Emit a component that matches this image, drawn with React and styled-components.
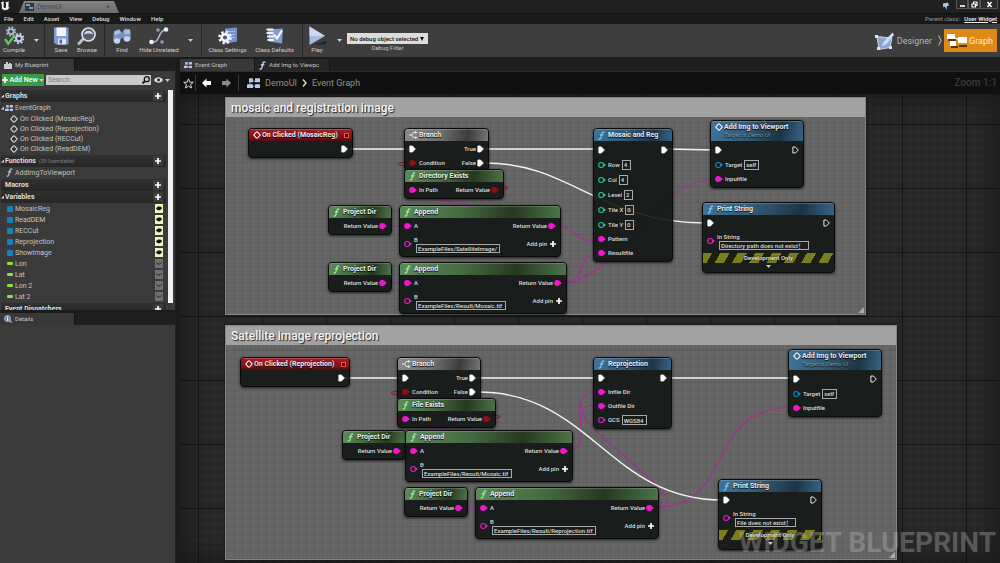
import React, { useState } from 'react';
import styled, { createGlobalStyle, css } from 'styled-components';

const graphItems = ['On Clicked (MosaicReg)', 'On Clicked (Reprojection)', 'On Clicked (RECCut)', 'On Clicked (ReadDEM)'];
const widgetVars = ['MosaicReg', 'ReadDEM', 'RECCut', 'Reprojection', 'ShowImage'];
const numberVars = ['Lon', 'Lat', 'Lon 2', 'Lat 2'];

const PINK = '#f018cc';
const GREEN = '#1fc79a';
const BLUE = '#1689c4';
const RED = '#950e10';

const execPin = { exec: true };
const execOn = { exec: true, on: true };
const returnPin = { color: PINK, on: true, label: 'Return Value' };

const branchRows = [
    { left: execOn, right: { exec: true, on: true, label: 'True' } },
    { left: { color: RED, on: true, label: 'Condition' }, right: { exec: true, on: true, label: 'False' } },
];

const existsRows = [
    { left: { color: PINK, on: true, label: 'In Path' }, right: { color: RED, on: true, label: 'Return Value' } },
];

const addImgRows = [
    { h: 15, left: execOn, right: execPin },
    { h: 15, left: { color: BLUE, label: 'Target', value: 'self', box: 15 } },
    { left: { color: PINK, on: true, label: 'Inputfile' } },
];

const appendRows = (value, box) => [
    { left: { color: PINK, on: true, label: 'A' }, right: returnPin },
    { h: 22, left: { color: PINK, label: 'B', value, box, stacked: true }, addPin: true },
];

const printRows = (value, box) => [
    { left: execOn, right: execPin },
    { h: 22, left: { color: PINK, label: 'In String', value, box, stacked: true } },
];

const nodes = [
    { id: 'click1', kind: 'event', icon: 'event', title: 'On Clicked (MosaicReg)', x: 68, y: 34, w: 105, bind: true, rows: [{ right: execOn }] },
    { id: 'branch1', kind: 'flow', icon: 'branch', title: 'Branch', x: 224, y: 34, w: 85, rows: branchRows },
    { id: 'dir', kind: 'pure', icon: 'fn', title: 'Directory Exists', x: 224, y: 75, w: 100, rows: existsRows },
    { id: 'proj1', kind: 'pure', icon: 'fn', title: 'Project Dir', x: 148, y: 111, w: 64, rows: [{ right: returnPin }] },
    { id: 'append1', kind: 'pure', icon: 'fn', title: 'Append', x: 219, y: 111, w: 162, rows: appendRows('ExampleFiles/SatelliteImage/', 84) },
    { id: 'proj2', kind: 'pure', icon: 'fn', title: 'Project Dir', x: 148, y: 168, w: 64, rows: [{ right: returnPin }] },
    { id: 'append2', kind: 'pure', icon: 'fn', title: 'Append', x: 219, y: 168, w: 168, rows: appendRows('ExampleFiles/Result/Mosaic.tif', 90) },
    { id: 'mosaic', kind: 'call', icon: 'fn', title: 'Mosaic and Reg', x: 413, y: 34, w: 80, rows: [
        { h: 15, left: execOn, right: execOn },
        { h: 15, left: { color: GREEN, label: 'Row', value: '4', box: 9 } },
        { h: 15, left: { color: GREEN, label: 'Col', value: '4', box: 9 } },
        { h: 15, left: { color: GREEN, label: 'Level', value: '2', box: 9 } },
        { h: 15, left: { color: GREEN, label: 'Tile X', value: '0', box: 9 } },
        { h: 15, left: { color: GREEN, label: 'Tile Y', value: '0', box: 9 } },
        { left: { color: PINK, on: true, label: 'Pattern' } },
        { left: { color: PINK, on: true, label: 'Resultfile' } },
    ] },
    { id: 'add1', kind: 'call', icon: 'event', title: 'Add Img to Viewport', sub: 'Target is Demo UI', x: 530, y: 26, w: 94, rows: addImgRows },
    { id: 'print1', kind: 'call', icon: 'fn', title: 'Print String', x: 522, y: 108, w: 133, dev: true, rows: printRows('Directory path does not exist！', 90) },
    { id: 'click2', kind: 'event', icon: 'event', title: 'On Clicked (Reprojection)', x: 60, y: 263, w: 110, bind: true, rows: [{ right: execOn }] },
    { id: 'branch2', kind: 'flow', icon: 'branch', title: 'Branch', x: 217, y: 263, w: 84, rows: branchRows },
    { id: 'file', kind: 'pure', icon: 'fn', title: 'File Exists', x: 217, y: 304, w: 99, rows: existsRows },
    { id: 'proj3', kind: 'pure', icon: 'fn', title: 'Project Dir', x: 162, y: 336, w: 64, rows: [{ right: returnPin }] },
    { id: 'append3', kind: 'pure', icon: 'fn', title: 'Append', x: 225, y: 336, w: 168, rows: appendRows('ExampleFiles/Result/Mosaic.tif', 90) },
    { id: 'proj4', kind: 'pure', icon: 'fn', title: 'Project Dir', x: 224, y: 393, w: 64, rows: [{ right: returnPin }] },
    { id: 'append4', kind: 'pure', icon: 'fn', title: 'Append', x: 295, y: 393, w: 184, rows: appendRows('ExampleFiles/Result/Reprojection.tif', 104) },
    { id: 'reproj', kind: 'call', icon: 'fn', title: 'Reprojection', x: 413, y: 263, w: 79, rows: [
        { left: execOn, right: execOn },
        { left: { color: PINK, on: true, label: 'Infile Dir' } },
        { left: { color: PINK, on: true, label: 'Outfile Dir' } },
        { left: { color: PINK, label: 'GCS', value: 'WGS84', box: 25 } },
    ] },
    { id: 'add2', kind: 'call', icon: 'event', title: 'Add Img to Viewport', sub: 'Target is Demo UI', x: 608, y: 255, w: 94, rows: addImgRows },
    { id: 'print2', kind: 'call', icon: 'fn', title: 'Print String', x: 538, y: 385, w: 104, dev: true, rows: printRows('File does not exist！', 61) },
];

const stringWires = [
    'M203 132 H225', 'M203 189 H225', 'M216 357 H231', 'M280 414 H302',
    'M375 132 C420 132 180 95 230 95',
    'M375 132 C400 132 390 147 417 147',
    'M381 189 C410 189 395 160 417 160',
    'M381 189 C440 189 470 85 536 85',
    'M387 357 C430 357 170 324 221 324',
    'M387 357 C420 357 380 298 417 298',
    'M472 414 C540 414 350 311 417 311',
    'M472 414 C560 414 520 313 614 313',
];

const boolWires = ['M230 69 C216 67 214 72 226 72', 'M316 93 C332 91 332 96 318 95', 'M223 298 C209 296 207 301 219 301', 'M308 322 C324 320 324 325 310 324'];

const execWires = [
    'M170 55 H230', 'M304 55 H417', 'M487 55 L534 56', 'M306 69 C390 69 420 129 526 129',
    'M164 284 H221', 'M296 284 H417', 'M482 284 H612', 'M298 298 C410 298 430 406 542 406',
];

/* ---------- icons ---------- */

const FnIcon = ({ color = '#cfe8ff' }) => (
    <svg width="7" height="9" viewBox="0 0 7 9" fill="none" stroke={color} strokeWidth="1.2" strokeLinecap="round">
        <path d="M6 1.2C4.6.5 4.1 1.5 3.8 3L3 6.3C2.7 7.8 2 8.4 1 7.9M2.2 3.8h2.8" />
    </svg>
);

const DiamondIcon = ({ color = '#fff' }) => (
    <svg width="8" height="8" viewBox="0 0 8 8" fill="none" stroke={color} strokeWidth="1.1">
        <path d="M3.4 1h1.1L7.2 4 4.5 7H3.4L.8 4z" />
    </svg>
);

const BranchIcon = () => (
    <svg width="9" height="8" viewBox="0 0 9 8" fill="none" stroke="#eee">
        <path d="M0 4h2.5M7 1.4H4.5L2.5 4l2 2.6H7" />
        <path d="M6.2 0L8.6 1.4 6.2 2.8zM6.2 5.2l2.4 1.4L6.200 8z" fill="#eee" stroke="none" />
    </svg>
);

const ExecPin = ({ on }) => (
    <svg width="7" height="8" viewBox="0 0 7 8" fill={on ? '#fff' : 'none'} stroke="#fff" strokeWidth="0.9" strokeLinejoin="round">
        <path d="M.9 1H3.4L6.3 4 3.4 7H.9z" />
    </svg>
);

const DataPin = ({ color, on }) => (
    <svg width="8" height="8" viewBox="0 0 8 8">
        <circle cx="3.2" cy="4" r="2.5" fill={on ? color : 'none'} stroke={color} strokeWidth="1.1" />
        <path d="M6 2.6L8 4 6 5.4z" fill={color} />
    </svg>
);

const PlusIcon = ({ size = 6 }) => (
    <svg width={size} height={size} viewBox="0 0 6 6"><path d="M3 0v6M0 3h6" stroke="#fff" strokeWidth="1.7" /></svg>
);

const CaretIcon = () => (
    <svg width="5" height="3" viewBox="0 0 5 3"><path d="M0 0h5L2.5 3z" fill="#ccc" /></svg>
);

const GraphIcon = ({ w = 13 }) => (
    <svg width={w} height={w * 0.8} viewBox="0 0 13 10">
        <path d="M4 3h4M4 8h4M3 3v5" stroke="#8c9cc4" />
        <g fill="#b9c8ee">
            <rect x="2" y="0" width="4" height="4" rx="0.6" />
            <rect x="8" y="0" width="5" height="4" rx="0.6" />
            <rect x="0" y="6" width="6" height="4" rx="0.6" />
            <rect x="8" y="6" width="5" height="4" rx="0.6" />
        </g>
    </svg>
);

// eight teeth around a round hub
const Gear = ({ x, y, r, color, hole }) => (
    <g transform={`translate(${x} ${y})`}>
        <circle r={r * 0.85} fill="none" stroke={color} strokeWidth={r * 0.4} strokeDasharray={`${r * 0.34} ${r * 0.3275}`} />
        <circle r={r * 0.72} fill={color} />
        <circle r={r * 0.32} fill={hole} />
    </g>
);

const toolIcons = {
    compile: (
        <>
            <Gear x={7} y={5} r={5} color="#a9b8d8" hole="#35383e" />
            <Gear x={15} y={12} r={5.4} color="#bccae6" hole="#35383e" />
            <path d="M1 12.5l3.2 4.500L11 8.500" fill="none" stroke="#59c45c" strokeWidth="2.6" />
        </>
    ),
    save: (
        <>
            <path d="M3 1h14.5v17H5l-2-2z" fill="#7e9bd2" />
            <path d="M5.5 1h9.5v8.500H5.5z" fill="#f1f5fc" />
            <path d="M7 12h8v6H7z" fill="#dfe7f6" />
            <path d="M8.500 13H11v4H8.500z" fill="#4d6297" />
        </>
    ),
    browse: (
        <>
            <path d="M6.5 12L2 17" stroke="#b5bccb" strokeWidth="3" strokeLinecap="round" />
            <circle cx="11.5" cy="8" r="6.5" fill="#565d6b" stroke="#d9dfeb" strokeWidth="1.7" />
            <path d="M7 8a4.6 4.6 0 0 1 9 0c-3-1.500-6-1.500-9 0z" fill="#c7d4ee" />
        </>
    ),
    find: (
        <>
            <path d="M2 5l5-2 3 3 3-4 5 1 1 9-6 2-3-3-3 5-6-2z" fill="#7a93c4" />
            <path d="M2 5l5-2 2 3-6 3zM12 4l6-1 .5 4-6 1z" fill="#aabfe4" />
            <ellipse cx="5" cy="14.5" rx="3.2" ry="2.7" fill="#c6d5f0" />
            <ellipse cx="15" cy="12.5" rx="3.2" ry="2.7" fill="#c6d5f0" />
        </>
    ),
    hide: (
        <>
            <path d="M3.5 15.5c8 1 5-11.5 13-12" fill="none" stroke="#a6bad8" strokeWidth="1.5" />
            <circle cx="2.5" cy="15.5" r="2.3" fill="#eef4ff" />
            <circle cx="17" cy="3" r="2.3" fill="#dfeaff" />
            <circle cx="9" cy="3.5" r="1.8" fill="#8d9bb3" />
            <circle cx="13" cy="15.5" r="1.8" fill="#8d9bb3" />
        </>
    ),
    settings: (
        <>
            <path d="M7 2L19 1v14l-12 2z" fill="#7891c9" />
            <path d="M9 5h8M9 8h8M9 11h8" stroke="#a8bce6" />
            <Gear x={7} y={11} r={6.5} color="#f2f5fb" hole="#4e5975" />
        </>
    ),
    defaults: (
        <>
            <path d="M3 3l15-1-1 15-13-2z" fill="#829bd0" />
            <path d="M1.5 3h7M1.5 6.5h7M2 10h7M2.5 13.5H9" stroke="#edf2fc" strokeWidth="1.8" />
            <path d="M9 8l3 4 5-8" fill="none" stroke="#fff" strokeWidth="2" />
        </>
    ),
    play: (
        <>
            <path d="M7 18l13-4-1 4z" fill="#202633" />
            <path d="M2.5 0L18 9.5 2.5 18.5z" fill="#aabbe0" />
            <path d="M2.5 0L18 9.5H2.5z" fill="#cad8f2" />
        </>
    ),
};

const ToolIcon = ({ name }) => <svg width="20" height="20" viewBox="0 0 20 19">{toolIcons[name]}</svg>;

/* ---------- graph ---------- */

function Pin({ pin, side }) {
    return (
        <PinWrap $side={side}>
            {pin.exec ? <ExecPin on={pin.on} /> : <DataPin color={pin.color} on={pin.on} />}
            <PinLabel $stacked={pin.stacked}>
                {pin.label && <span>{pin.label}</span>}
                {pin.value && <ValueBox $w={pin.box} $tall={!pin.stacked} defaultValue={pin.value} />}
            </PinLabel>
        </PinWrap>
    );
}

function GraphNode({ node }) {
    return (
        <NodeFrame $x={node.x} $y={node.y} $w={node.w}>
            <NodeHead $kind={node.kind} $tall={!!node.sub} $gap={node.icon === 'fn' ? 3 : 1}>
                {node.icon === 'fn' && <FnIcon color={node.kind === 'pure' ? '#9af09a' : '#7cc8f5'} />}
                {node.icon === 'event' && <DiamondIcon />}
                {node.icon === 'branch' && <BranchIcon />}
                <NodeTitle>
                    {node.title}
                    {node.sub && <em>{node.sub}</em>}
                </NodeTitle>
                {node.bind && <BindMark />}
            </NodeHead>
            <NodeBody>
                {node.rows.map((row, i) => (
                    <NodeRow key={i} $h={row.h}>
                        {row.left ? <Pin pin={row.left} side="left" /> : <span />}
                        {row.right && <Pin pin={row.right} side="right" />}
                        {row.addPin && <AddPin>Add pin <PlusIcon size={6} /></AddPin>}
                    </NodeRow>
                ))}
            </NodeBody>
            {node.dev && (
                <>
                    <DevStripe>Development Only</DevStripe>
                    <Expander aria-label="Expand"><CaretIcon /></Expander>
                </>
            )}
        </NodeFrame>
    );
}

function Section({ title, note, open, children }) {
    return (
        <>
            <SectionHead>
                <Arrow $open={open} />
                <b>{title}</b>
                {note && <small>{note}</small>}
                <AddButton aria-label={`Add ${title}`}><PlusIcon size={6} /></AddButton>
            </SectionHead>
            {children && <TreeList>{children}</TreeList>}
        </>
    );
}

function Eye({ open }) {
    return (
        <EyeBox $open={open}>
            <svg width="6" height="5" viewBox="0 0 6 5">
                {open
                    ? <path d="M0 2.5C1.5 0 4.5 0 6 2 4.5 5 1.5 5 0 2.5z" fill="#111" />
                    : <path d="M.5 1.5C1.5 3.5 4.5 3.5 5.5 1.5" fill="none" stroke="#222" />}
            </svg>
        </EyeBox>
    );
}

function MyBlueprint() {
    const [query, setQuery] = useState('');
    return (
        <Panel>
            <TabStrip>
                <DockTab>
                    <svg width="8" height="7" viewBox="0 0 8 7"><path d="M0 2h2V0h2v2h1V1h2v1h1v5H0z" fill="#c9cbd0" /></svg>
                    My Blueprint
                </DockTab>
            </TabStrip>
            <PanelBody>
                <SearchRow>
                    <AddNew><PlusIcon size={6} />Add New<CaretIcon /></AddNew>
                    <SearchBox>
                        <input aria-label="Search" placeholder="Search" value={query} onChange={(e) => setQuery(e.target.value)} />
                        <svg width="8" height="8" viewBox="0 0 8 8" fill="none" stroke="#151515" strokeWidth="1.3">
                            <circle cx="4.8" cy="3.2" r="2.5" />
                            <path d="M3 5L.5 7.5" strokeWidth="1.8" />
                        </svg>
                    </SearchBox>
                    <ViewButton aria-label="View options">
                        <svg width="9" height="6" viewBox="0 0 9 6"><path d="M0 3C2-.6 7-.6 9 3 7 6.6 2 6.6 0 3z" fill="#ddd" /><circle cx="4.5" cy="3" r="1.4" fill="#222" /></svg>
                        <CaretIcon />
                    </ViewButton>
                </SearchRow>
                <ScrollArea>
                    <Tree>
                        <Section title="Graphs" open>
                            <TreeItem $h={12}><Arrow $open /><GraphIcon w={8} /><span>EventGraph</span></TreeItem>
                            {graphItems.map((g) => (
                                <TreeItem key={g} $h={10} $indent={9}><DiamondIcon color="#ddd" /><span>{g}</span></TreeItem>
                            ))}
                        </Section>
                        <Section title="Functions" note="(39 Overridable)" open>
                            <TreeItem $h={11} $indent={5}><FnIcon color="#a9bedc" /><span>AddImgToViewport</span></TreeItem>
                        </Section>
                        <Section title="Macros" />
                        <Section title="Variables" open>
                            {widgetVars.map((v) => (
                                <TreeItem key={v} $h={11} $indent={6}><VarChip $widget /><span>{v}</span><Eye open /></TreeItem>
                            ))}
                            {numberVars.map((v) => (
                                <TreeItem key={v} $h={11} $indent={6}><VarChip /><span>{v}</span><Eye /></TreeItem>
                            ))}
                        </Section>
                        <Section title="Event Dispatchers" />
                    </Tree>
                    <ScrollThumb />
                </ScrollArea>
            </PanelBody>
        </Panel>
    );
}

function Toolbar() {
    const [filter, setFilter] = useState('none');
    return (
        <ToolbarBar>
            <ToolGroup $pad="0">
                <ToolButton $w={28}><ToolIcon name="compile" />Compile</ToolButton>
                <DropButton aria-label="Compile options"><CaretIcon /></DropButton>
            </ToolGroup>
            <ToolGroup $pad="0 4px 0 3px">
                <ToolButton $w={26}><ToolIcon name="save" />Save</ToolButton>
                <ToolButton $w={26}><ToolIcon name="browse" />Browse</ToolButton>
            </ToolGroup>
            <ToolGroup $pad="0 3px">
                <ToolButton $w={28}><ToolIcon name="find" />Find</ToolButton>
                <ToolButton $w={46}><ToolIcon name="hide" />Hide Unrelated</ToolButton>
                <DropButton aria-label="Hide options"><CaretIcon /></DropButton>
            </ToolGroup>
            <ToolGroup $pad="0 4px 0 2px">
                <ToolButton $w={47}><ToolIcon name="settings" />Class Settings</ToolButton>
                <ToolButton $w={47}><ToolIcon name="defaults" />Class Defaults</ToolButton>
            </ToolGroup>
            <ToolGroup $pad="0">
                <ToolButton $w={28}><ToolIcon name="play" />Play</ToolButton>
                <DropButton aria-label="Play options"><CaretIcon /></DropButton>
            </ToolGroup>
            <DebugFilter>
                <span className="box">
                    <select id="debug" value={filter} onChange={(e) => setFilter(e.target.value)}>
                        <option value="none">No debug object selected</option>
                    </select>
                </span>
                <label htmlFor="debug">Debug Filter</label>
            </DebugFilter>
            <ModeSwitch>
                <ModeButton>
                    <svg width="20" height="20" viewBox="0 0 20 20">
                        <path d="M2 5.5l15 1.5-2 9.5-11 2z" fill="#8aa5cf" stroke="#cdd5e2" />
                        <path d="M17.5 1.5L9 10.5l-2.5 5 5-2.5L19 4z" fill="#c9defa" />
                        <g fill="#dfe5ee"><rect x="0" y="4" width="3" height="3" /><rect x="2" y="16" width="3" height="3" /><rect x="14" y="15" width="3" height="3" /></g>
                    </svg>
                    Designer
                </ModeButton>
                <svg width="4" height="11" viewBox="0 0 4 11" fill="none" stroke="#aaa" strokeWidth="1.2"><path d="M.5.5l2.600 5-2.600 5" /></svg>
                <ModeButton $active>
                    <svg width="20" height="15" viewBox="0 0 20 15">
                        <path d="M6 4l6 3M5 6l3 5" stroke="#fff" strokeWidth="1.2" />
                        <path d="M1 6h8v2H1zM12 12h8v2h-8zM4 13h7v2H4z" fill="#5b3503" />
                        <g fill="#fff"><rect x="0" y="1" width="8" height="5" /><rect x="11" y="4" width="9" height="6" /><rect x="3" y="8" width="6" height="5" /></g>
                    </svg>
                    Graph
                </ModeButton>
            </ModeSwitch>
        </ToolbarBar>
    );
}

export default function App() {
    return (
        <Shell>
            <GlobalStyle />
            <TitleBar>
                <Logo viewBox="0 0 12 12"><path d="M1 2.5c1-1 2.5-1.500 3.500-1.500L4 2v5.500l1 1 1.500-1V3L6 2l4-1-.7 1.500v5L10.500 7C9.500 9.500 8 10 7.500 10.500L6.500 9.800 5.300 11 2 9V4z" fill="#f2f2f2" /></Logo>
                <MainTab>
                    <svg width="9" height="8" viewBox="0 0 9 8"><rect width="9" height="8" fill="#26384c" /><path d="M1 2h4M4 5h4" stroke="#9fc1e0" strokeWidth="1.5" /></svg>
                    DemoUI
                    <i>×</i>
                </MainTab>
                <WindowButtons>
                    <svg width="9" height="9" viewBox="0 0 9 9"><path d="M2 2.5l5-1 1 3-2 .5L5.500 9 4 5.500 2 6z" fill="#a8cbed" /></svg>
                    <button aria-label="Minimize"><svg width="7" height="7" viewBox="0 0 7 7"><path d="M1 5h5" stroke="#fff" strokeWidth="1.6" /></svg></button>
                    <button aria-label="Restore"><svg width="7" height="7" viewBox="0 0 7 7" fill="none" stroke="#fff" strokeWidth="1.2"><path d="M1 3h3.500v3H1zM2.500 3V1H6v3.500H4.500" /></svg></button>
                    <button aria-label="Close"><svg width="7" height="7" viewBox="0 0 7 7"><path d="M1.500 1l4 5M5.500 1l-4 5" stroke="#fff" strokeWidth="1.5" /></svg></button>
                </WindowButtons>
            </TitleBar>
            <MenuBar>
                {['File', 'Edit', 'Asset', 'View', 'Debug', 'Window', 'Help'].map((m) => <button key={m}>{m}</button>)}
                <ParentClass>Parent class: <a href="#parent">User Widget</a></ParentClass>
            </MenuBar>
            <Toolbar />
            <Workspace>
                <SideColumn>
                    <MyBlueprint />
                    <Panel>
                        <TabStrip>
                            <DockTab>
                                <svg width="8" height="8" viewBox="0 0 8 8"><path d="M5.500 5.500l2 2" stroke="#bbb" strokeWidth="1.4" /><circle cx="3.500" cy="3.500" r="3" fill="#7284b5" stroke="#aab4cf" /><path d="M3.500 3v2.500M3.500 1.500v1" stroke="#fff" /></svg>
                                Details
                            </DockTab>
                        </TabStrip>
                        <PanelBody />
                    </Panel>
                </SideColumn>
                <GraphColumn>
                    <TabStrip>
                        <DockTab><GraphIcon w={8} />Event Graph</DockTab>
                        <DockTab $dim><FnIcon />Add Img to Viewpc</DockTab>
                    </TabStrip>
                    <Crumbs>
                        <CrumbButton $w={10} aria-label="Favorite">
                            <svg width="11" height="11" viewBox="0 0 11 11" fill="none" stroke="#ddd"><path d="M5.500.8l1.300 3.300 3.500.2-2.700 2.200.9 3.500-3-1.900-3 1.900.9-3.500L.7 4.300l3.500-.2z" /></svg>
                        </CrumbButton>
                        <Divider />
                        <CrumbButton $w={20} aria-label="Back">
                            <svg width="9" height="10" viewBox="0 0 9 10"><path d="M0 5L4.500.5V3H9v4H4.500v2.500z" fill="#fff" /></svg>
                        </CrumbButton>
                        <CrumbButton $w={20} aria-label="Forward">
                            <svg width="9" height="10" viewBox="0 0 9 10"><path d="M9 5L4.500.5V3H0v4h4.500v2.500z" fill="#8b8b8b" /></svg>
                        </CrumbButton>
                        <Divider />
                        <CrumbPath>
                            <GraphIcon w={13} />
                            <span>DemoUI</span>
                            <svg width="5" height="8" viewBox="0 0 5 8" fill="none" stroke="#ddd" strokeWidth="1.4"><path d="M1 .5L4 4 1 7.5" /></svg>
                            <span>Event Graph</span>
                        </CrumbPath>
                        <ZoomText>Zoom 1:1</ZoomText>
                    </Crumbs>
                    <Canvas>
                        <CommentBox $x={45} $y={3} $w={641} $h={218}><h2>mosaic and registration image</h2></CommentBox>
                        <CommentBox $x={45} $y={231} $w={672} $h={235}><h2>Satellite image reprojection</h2></CommentBox>
                        <Wires>
                            <g stroke="#b81fa2" strokeWidth="1.2" opacity="0.8">{stringWires.map((d) => <path key={d} d={d} />)}</g>
                            <g stroke="#8d1418">{boolWires.map((d) => <path key={d} d={d} />)}</g>
                            <g stroke="#f4f4f4" strokeWidth="1.4">{execWires.map((d) => <path key={d} d={d} />)}</g>
                        </Wires>
                        {nodes.map((n) => <GraphNode key={n.id} node={n} />)}
                        <Watermark>WIDGET BLUEPRINT</Watermark>
                    </Canvas>
                </GraphColumn>
            </Workspace>
        </Shell>
    );
}

/* ---------- styles ---------- */

const GlobalStyle = createGlobalStyle`
* { box-sizing: border-box; }
body {
    margin: 0;
    background: #1b1b1b;
    color: #c4c4c4;
    font-family: Roboto, "Noto Sans CJK SC", sans-serif;
    font-size: 7px;
    line-height: 8px;
}
button, input, select {
    font: inherit;
    color: inherit;
    background: none;
    border: 0;
    padding: 0;
    margin: 0;
}
svg { display: block; flex: none; }
`;

const Shell = styled.div`
display: flex;
flex-direction: column;
height: 100vh;
overflow: hidden;
`;

const TitleBar = styled.header`
display: flex;
height: 13px;
background: #202020;
`;

const Logo = styled.svg`
width: 11px;
height: 12px;
`;

const MainTab = styled.div`
display: flex;
align-items: center;
gap: 3px;
width: 100px;
height: 12px;
margin: 1px 0 0 8px;
padding: 0 9px 0 6px;
background: linear-gradient(#858585, #6b6b6b);
clip-path: polygon(5px 0, 95px 0, 100% 100%, 0 100%);
color: #484848;

i {
    margin-left: auto;
    font-style: normal;
}
`;

const WindowButtons = styled.div`
display: flex;
align-items: flex-start;
margin-left: auto;
padding-right: 2px;

> svg { margin: 1px 6px 0 0; }

button {
    display: flex;
    align-items: center;
    justify-content: center;
    width: 12px;
    height: 9px;
    border: 1px solid #555;
    border-top: 0;
    background: #2a2a2a;
}

button:last-child { width: 18px; }
`;

const MenuBar = styled.nav`
display: flex;
align-items: center;
gap: 10px;
height: 11px;
padding: 0 3px 1px 4px;
background: #191919;
border-top: 1px solid #111;
font-size: 6px;
font-weight: 500;
color: #ddd;
`;

const ParentClass = styled.span`
margin-left: auto;
color: #888;

a {
    margin-left: 3px;
    color: #eee;
}
`;

const ToolbarBar = styled.div`
display: flex;
height: 33px;
background: #3e3e3e;
font-size: 6px;
`;

const ToolGroup = styled.div`
display: flex;
padding: ${(p) => p.$pad};
border-right: 1px solid #2a2a2a;

&:nth-child(5) { border: 0; }
`;

const ToolButton = styled.button`
display: flex;
flex-direction: column;
align-items: center;
width: ${(p) => p.$w}px;
padding-top: 2px;
white-space: nowrap;
color: #d0d0d0;
`;

const DropButton = styled.button`
display: flex;
align-items: center;
justify-content: center;
width: 16px;
`;

const DebugFilter = styled.div`
display: flex;
flex-direction: column;
align-items: center;
padding: 9px 0 0 0;

.box {
    position: relative;
    display: flex;
}

.box::after {
    content: '';
    position: absolute;
    right: 4px;
    top: 4px;
    border: 2px solid transparent;
    border-top: 4px solid #111;
    border-bottom: 0;
    pointer-events: none;
}

select {
    appearance: none;
    width: 81px;
    height: 11px;
    padding: 0 8px 0 3px;
    background: #dcdcdc;
    color: #111;
    font-weight: 500;
    line-height: 11px;
}
`;

const ModeSwitch = styled.div`
display: flex;
align-items: center;
gap: 2px;
margin-left: auto;
padding-right: 3px;
`;

const ModeButton = styled.button`
display: flex;
align-items: center;
gap: 2px;
height: 23px;
padding: 0 4px 0 3px;
background: ${(p) => (p.$active ? '#de8a18' : 'none')};
color: ${(p) => (p.$active ? '#ffe9c8' : '#b4b4b4')};
font-size: 9px;
`;

const Workspace = styled.main`
display: flex;
flex: 1;
gap: 4px;
min-height: 0;
padding-top: 2px;
`;

const SideColumn = styled.aside`
display: grid;
grid-template-rows: minmax(0, 1fr) minmax(0, 1fr);
gap: 3px;
width: 176px;
`;

const Panel = styled.section`
display: flex;
flex-direction: column;
min-height: 0;
`;

const PanelBody = styled.div`
display: flex;
flex-direction: column;
flex: 1;
min-height: 0;
padding-top: 3px;
background: #3a3a3a;
border-right: 1px solid #202020;
`;

const TabStrip = styled.div`
display: flex;
flex: none;
height: 12px;
background: #1f1f1f;
`;

const DockTab = styled.div`
display: flex;
align-items: center;
gap: 3px;
width: 75px;
padding: 0 0 0 4px;
background: ${(p) => (p.$dim ? '#262626' : '#383838')};
border-right: 1px solid #151515;
font-size: 6px;
white-space: nowrap;
`;

const SearchRow = styled.div`
display: flex;
align-items: center;
gap: 2px;
padding: 0 4px 0 2px;
height: 12px;
`;

const AddNew = styled.button`
display: flex;
align-items: center;
justify-content: center;
gap: 1px;
width: 42px;
height: 12px;
background: #3b9b45;
color: #fff;
font-weight: 500;
white-space: nowrap;
`;

const SearchBox = styled.div`
display: flex;
flex: 1;
align-items: center;
height: 10px;
padding: 0 1px 0 2px;
background: #c9c9c9;
color: #222;

input {
    flex: 1;
    min-width: 0;
    outline: 0;
}

input::placeholder { color: #808080; }
`;

const ViewButton = styled.button`
display: flex;
align-items: center;
gap: 2px;
padding: 0 1px;
`;

const ScrollArea = styled.div`
display: flex;
flex: 1;
gap: 2px;
min-height: 0;
padding: 4px 2px 0 1px;
overflow: hidden;
`;

const Tree = styled.div`
flex: 1;
`;

const ScrollThumb = styled.div`
width: 5px;
height: calc(100% - 7px);
background: #f2f2f2;
`;

const SectionHead = styled.div`
display: flex;
align-items: center;
height: 12px;
padding-right: 3px;
background: linear-gradient(#303030, #272727);
color: #dedede;

small {
    margin-left: 3px;
    font-size: 5px;
    color: #808080;
}
`;

const AddButton = styled.button`
display: flex;
align-items: center;
justify-content: center;
width: 10px;
height: 10px;
margin-left: auto;
background: #3c3c3c;
`;

const Arrow = styled.i`
width: 3px;
height: 3px;
margin-right: 1px;
background: ${(p) => (p.$open ? '#ddd' : 'none')};
clip-path: polygon(100% 0, 100% 100%, 0 100%);
`;

const TreeList = styled.ul`
margin: 0;
padding: 0 0 1px;
list-style: none;
`;

const TreeItem = styled.li`
display: flex;
align-items: center;
height: ${(p) => p.$h}px;
padding: 0 3px 0 ${(p) => p.$indent || 0}px;

> span { margin-left: 2px; }
`;

const VarChip = styled.i`
width: 6px;
height: ${(p) => (p.$widget ? 6 : 3)}px;
border-radius: 1px;
background: ${(p) => (p.$widget ? '#1482bd' : '#8fe03c')};
`;

const EyeBox = styled.i`
display: flex;
align-items: center;
justify-content: center;
width: 8px;
height: 9px;
margin-left: auto;
background: ${(p) => (p.$open ? '#f0f3b8' : '#707070')};
`;

const GraphColumn = styled.section`
display: flex;
flex: 1;
flex-direction: column;
min-width: 0;
`;

const Crumbs = styled.div`
display: flex;
flex: none;
align-items: center;
height: 23px;
padding: 0 3px;
background: #101010;
border-top: 1px solid #2c2c2c;
color: #8f8f8f;
font-size: 9px;
line-height: 12px;
`;

const CrumbButton = styled.button`
display: flex;
justify-content: center;
width: ${(p) => p.$w}px;
`;

const CrumbPath = styled.div`
display: flex;
align-items: center;
gap: 5px;
padding-left: 8px;
`;

const Divider = styled.i`
width: 1px;
height: 16px;
margin-left: 2px;
background: #3a3a3a;
`;

const ZoomText = styled.strong`
margin-left: auto;
font-size: 10px;
font-weight: 500;
color: #3a3a3a;
`;

const Canvas = styled.div`
position: relative;
flex: 1;
overflow: hidden;
background-color: #272727;
background-image:
    linear-gradient(90deg, #161616 1px, transparent 1px),
    linear-gradient(#161616 1px, transparent 1px),
    linear-gradient(90deg, #2d2d2d 1px, transparent 1px),
    linear-gradient(#2d2d2d 1px, transparent 1px);
background-size: 64px 64px, 64px 64px, 8px 8px, 8px 8px;
background-position: 18px 30px;
box-shadow: inset 0 0 30px rgba(0, 0, 0, 0.5);
`;

const CommentBox = styled.div`
position: absolute;
left: ${(p) => p.$x}px;
top: ${(p) => p.$y}px;
width: ${(p) => p.$w}px;
height: ${(p) => p.$h}px;
border: 1px solid #858585;
background-color: #666;
background-image:
    linear-gradient(90deg, rgba(0, 0, 0, 0.07) 1px, transparent 1px),
    linear-gradient(rgba(0, 0, 0, 0.07) 1px, transparent 1px);
background-size: 8px 8px;
box-shadow: 0 0 3px #111;

h2 {
    margin: 0;
    padding: 0 5px;
    height: 19px;
    background: #a2a2a2;
    color: #f5f5f5;
    font-size: 12px;
    font-weight: 500;
    line-height: 20px;
    text-shadow: 1px 1px 1px #222;
}

&::after {
    content: '';
    position: absolute;
    right: 1px;
    bottom: 1px;
    width: 6px;
    height: 6px;
    background: #aaa;
    clip-path: polygon(100% 0, 100% 100%, 0 100%);
}
`;

const Wires = styled.svg`
position: absolute;
inset: 0;
width: 100%;
height: 100%;
fill: none;
`;

const NodeFrame = styled.article`
position: absolute;
left: ${(p) => p.$x}px;
top: ${(p) => p.$y}px;
width: ${(p) => p.$w}px;
border: 1px solid #0a0a0a;
border-radius: 4px;
background: rgba(17, 21, 19, 0.9);
box-shadow: 0 1px 3px rgba(0, 0, 0, 0.7);
overflow: hidden;
font-size: 6px;
font-weight: 500;
color: #dcdcdc;
`;

const headColors = {
    event: css`background: linear-gradient(#a51d24, #7d1218 70%, #4a0d10);`,
    flow: css`background: linear-gradient(100deg, #8a8a8a, #6c6c6c 45%, #3b3b3b 75%, #777);`,
    pure: css`background: linear-gradient(100deg, #5d8a5c, #44683f 40%, #25391f 70%, #4c7448);`,
    call: css`background: linear-gradient(100deg, #3f7399, #315a78 40%, #1e3443 75%, #356489);`,
};

const NodeHead = styled.div`
display: flex;
align-items: ${(p) => (p.$tall ? 'flex-start' : 'center')};
gap: ${(p) => p.$gap}px;
height: ${(p) => (p.$tall ? 20 : 12)}px;
padding: ${(p) => (p.$tall ? '2px' : '0')} 3px 0 4px;
box-shadow: inset 0 1px 0 rgba(255, 255, 255, 0.2);
${(p) => headColors[p.$kind]}
`;

const NodeTitle = styled.b`
flex: 1;
font-size: 7px;
color: #ececec;
white-space: nowrap;
text-shadow: 0 1px 1px #000;

em {
    display: block;
    font-size: 6px;
    font-weight: 400;
    color: #7d9a97;
}
`;

const BindMark = styled.i`
width: 5px;
height: 5px;
border: 1px solid #ff4a4a;
background: #400;
`;

const NodeBody = styled.div`
padding: 1px 4px;
`;

const NodeRow = styled.div`
display: flex;
align-items: center;
justify-content: space-between;
height: ${(p) => p.$h || 14}px;
`;

const PinWrap = styled.label`
display: flex;
flex-direction: ${(p) => (p.$side === 'right' ? 'row-reverse' : 'row')};
align-items: center;
gap: ${(p) => (p.$side === 'right' ? 1 : 2)}px;
white-space: nowrap;
`;

const PinLabel = styled.span`
display: flex;
gap: ${(p) => (p.$stacked ? 0 : 2)}px;
flex-direction: ${(p) => (p.$stacked ? 'column' : 'row')};
align-items: ${(p) => (p.$stacked ? 'flex-start' : 'center')};

input { margin-left: ${(p) => (p.$stacked ? 2 : 0)}px; }
`;

const ValueBox = styled.input`
width: ${(p) => p.$w}px;
height: ${(p) => (p.$tall ? 10 : 9)}px;
padding: 0 1px;
border: 1px solid #aaa;
line-height: 7px;
`;

const AddPin = styled.button`
display: flex;
align-items: center;
gap: 3px;
`;

const DevStripe = styled.div`
height: 10px;
background: repeating-linear-gradient(120deg, #7c7d1c 0 8px, #1c1e14 8px 15px);
color: #e8e8e8;
line-height: 10px;
text-align: center;
text-shadow: 0 0 2px #000;
`;

const Expander = styled.button`
display: flex;
justify-content: center;
width: 100%;
height: 9px;
padding-top: 2px;
`;

const Watermark = styled.div`
position: absolute;
right: 4px;
bottom: 4px;
font-size: 28px;
line-height: 32px;
font-weight: 700;
color: rgba(190, 190, 190, 0.35);
pointer-events: none;
`;
